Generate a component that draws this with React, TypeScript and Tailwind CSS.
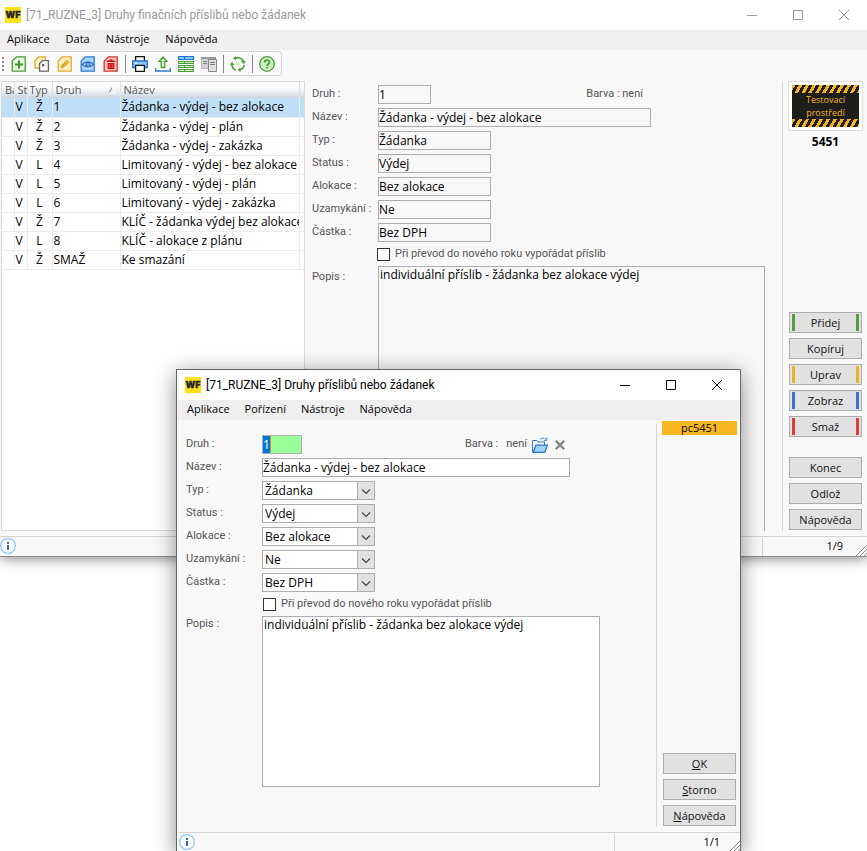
import { useEffect, useRef, useState } from 'react'
import type { ReactNode } from 'react'

const zaznamy = [
  { status: 'V', typ: 'Ž', druh: '1', nazev: 'Žádanka - výdej - bez alokace' },
  { status: 'V', typ: 'Ž', druh: '2', nazev: 'Žádanka - výdej - plán' },
  { status: 'V', typ: 'Ž', druh: '3', nazev: 'Žádanka - výdej - zakázka' },
  { status: 'V', typ: 'L', druh: '4', nazev: 'Limitovaný - výdej - bez alokace' },
  { status: 'V', typ: 'L', druh: '5', nazev: 'Limitovaný - výdej - plán' },
  { status: 'V', typ: 'L', druh: '6', nazev: 'Limitovaný - výdej - zakázka' },
  { status: 'V', typ: 'Ž', druh: '7', nazev: 'KLÍČ - žádanka výdej bez alokace' },
  { status: 'V', typ: 'L', druh: '8', nazev: 'KLÍČ - alokace z plánu' },
  { status: 'V', typ: 'Ž', druh: 'SMAŽ', nazev: 'Ke smazání' },
]

const detail = [
  { id: 'typ', label: 'Typ :', value: 'Žádanka' },
  { id: 'status', label: 'Status :', value: 'Výdej' },
  { id: 'alokace', label: 'Alokace :', value: 'Bez alokace' },
  { id: 'uzamykani', label: 'Uzamykání :', value: 'Ne' },
  { id: 'castka', label: 'Částka :', value: 'Bez DPH' },
]

const PAGE = 'M5.5 .8H14.2V15.2H1.2V5z'

function Icon({ children }: { children: ReactNode }) {
  return (
    <svg className="w-4 h-4 shrink-0" viewBox="0 0 16 16" fill="none" strokeWidth="1.3">
      {children}
    </svg>
  )
}

const icons: Record<string, ReactNode> = {
  Přidej: (
    <>
      <path d={PAGE} fill="#e6f7df" stroke="#4d9b3c" />
      <path d="M8 4.5v8M4 8.5h8" stroke="#3f9130" strokeWidth="2" />
    </>
  ),
  Kopíruj: (
    <>
      <path d="M4.5 .8H11.5V12H1V4.5z" fill="#fdf0c4" stroke="#e3ab2a" />
      <path d="M8.5 4.6H14.4V15.2H5.6V7.5z" fill="#fff" stroke="#666" />
      <path d="M8.5 7.5l2 1.5-2 2z" fill="#111" />
    </>
  ),
  Uprav: (
    <>
      <path d={PAGE} fill="#fdf0c4" stroke="#e3ab2a" />
      <path d="M3.6 12.4l.8-3.4L9.8 3.6l2.7 2.7L7 11.6z" fill="#e3a51f" />
      <path d="M8.6 4.8l2.6 2.6" stroke="#fff3c9" strokeWidth=".7" />
    </>
  ),
  Zobraz: (
    <>
      <path d={PAGE} fill="#a9d5ff" stroke="#2f78d0" />
      <path d="M2.3 8.5C5 5 10.5 5 13.4 8.5 10.5 11.5 5 11.5 2.3 8.5z" fill="#e5f3ff" stroke="#2f6dc0" />
      <circle cx="8" cy="8.4" r="2" fill="#7db8f5" stroke="#2f6dc0" />
    </>
  ),
  Smaž: (
    <>
      <path d={PAGE} fill="#ffc9c4" stroke="#d8322c" />
      <path d="M3.6 5.2h8.8M6.5 4.2h3" stroke="#c7120f" strokeWidth="1.5" />
      <path d="M4.6 7h6.8v6H4.6z" fill="#d01512" />
      <path d="M6.7 8v4M9.3 8v4" stroke="#f58a84" strokeWidth=".6" />
    </>
  ),
  Tisk: (
    <>
      <path d="M3.6 5V.7h8.8V5" fill="#fff" stroke="#111" />
      <path d="M.7 5h14.6v6.5H.7z" fill="#8ec6ff" stroke="#1f6fd0" />
      <path d="M3 7.2h2" stroke="#fff" />
      <path d="M3.6 9.4h8.8v5.9H3.6z" fill="#fff" stroke="#111" />
    </>
  ),
  Export: (
    <>
      <path d="M8 1L12 5.4H9.8V11.5H6.2V5.4H4z" fill="#d2f2c5" stroke="#4d9b3c" />
      <path d="M.7 12v3h14.6v-3" stroke="#2f78d0" />
    </>
  ),
  Seznam: (
    <>
      <path d="M0 0h16v4H0z" fill="#1f6fd0" />
      <path d="M1 1h5v2H1zM7 1h8v2H7z" fill="#8cc6fa" />
      <path d="M0 5h16v3H0zM0 9h16v3H0zM0 13h16v3H0z" fill="#4d9b3c" />
      <path d="M1 6h5v1H1zM7 6h8v1H7zM1 10h5v1H1zM7 10h8v1H7zM1 14h5v1H1zM7 14h8v1H7z" fill="#c9f0bb" />
    </>
  ),
  Náhled: (
    <>
      <path d="M.5 1.5h14v11H.5z" fill="#d0d0d0" stroke="#bdbdbd" strokeWidth="1" />
      <path d="M0 1h15v2H0z" fill="#9a9a9a" />
      <path d="M2 5.5h4M2 7.5h4" stroke="#8a8a8a" strokeWidth="1" />
      <path d="M7.500 3.500h8v12h-8z" fill="#e0e0e0" stroke="#888" strokeWidth="1" />
      <path d="M9 6.500h5M9 8.500h5" stroke="#777" strokeWidth="1" />
    </>
  ),
  Obnovit: (
    <>
      <path d="M5 2.300A6.300 6.300 0 0 1 13.400 5M14.200 9a6.300 6.300 0 0 1-4 5M6 14.100A6.300 6.300 0 0 1 1.800 8" stroke="#4d9b3c" strokeWidth="1.600" />
      <path d="M6 0v4.600L3 2.600zM11 5h5l-2.300 3.200zM10.500 11.400V16L7.600 14zM0 9l2-3.600L4.400 9z" fill="#4d9b3c" />
      <path d="M6.200 6.200h3.600v3.600H6.200z" fill="#c9f2bb" />
    </>
  ),
  Pomoc: (
    <>
      <circle cx="8" cy="8" r="7.300" fill="#c9f2bb" stroke="#4d9b3c" />
      <path d="M5.700 6.500C5.700 3.300 10.500 3.300 10.500 6.300 10.500 8 8.100 8 8.100 9.900M8.100 11v1.600" stroke="#3f9130" strokeWidth="1.600" />
    </>
  ),
}

function Logo() {
  return (
    <svg className="w-4 h-4 shrink-0" viewBox="0 0 16 16">
      <rect width="16" height="16" fill="#ffe01b" />
      <text x="8" y="11" textAnchor="middle" fontSize="9" fontWeight="900" fill="#24242c" stroke="#24242c" strokeWidth=".3" fontFamily="Inter, sans-serif">WF</text>
    </svg>
  )
}

function TitleBar({ title, active }: { title: string; active?: boolean }) {
  return (
    <header className={`flex items-center h-[30px] shrink-0 pr-[15px] bg-white ${active ? 'pl-2 text-black' : 'pl-[5px] text-[#999]'}`}>
      <Logo />
      <h1 className="flex-1 pl-[5px] text-[12px] leading-4 whitespace-nowrap font-['Roboto',sans-serif]">{title}</h1>
      <div className="flex gap-[30px]">
        <button aria-label="Minimalizovat" className="w-4 h-4">
          <svg viewBox="0 0 16 16" stroke="currentColor"><path d="M3 8.5h10" /></svg>
        </button>
        <button aria-label="Maximalizovat" className="w-4 h-4">
          <svg viewBox="0 0 16 16" fill="none" stroke="currentColor"><path d="M3.5 3.5h9v9h-9z" /></svg>
        </button>
        <button aria-label="Zavřít" className="w-4 h-4">
          <svg viewBox="0 0 16 16" stroke="currentColor"><path d="M3 3l10 10M13 3L3 13" /></svg>
        </button>
      </div>
    </header>
  )
}

function MenuBar({ items, active }: { items: string[]; active?: boolean }) {
  return (
    <nav className={`flex items-center h-5 shrink-0 pb-0.5 bg-[#efefef] ${active ? 'gap-[15px] pl-2.5' : 'gap-4 pl-[7px]'}`}>
      {items.map(i => (
        <button key={i}>{i}</button>
      ))}
    </nav>
  )
}

function StatusBar({ position, active }: { position: string; active?: boolean }) {
  return (
    <footer className={`flex h-5 shrink-0 border-t border-[#d4d4d4] ${active ? 'ml-0.5' : ''}`}>
      <div className="flex-1 pt-px">
        <svg className="w-4 h-4" viewBox="0 0 16 16">
          <circle cx="8" cy="8" r="7.4" fill="#fff" stroke="#8fc8f8" strokeWidth="1.2" />
          <path d="M7 4h2v2H7zM7 7h2v5H7z" fill="#2468c8" />
        </svg>
      </div>
      <div className={`flex items-center justify-end mt-px border-l border-[#d4d4d4] ${active ? 'w-[126px]' : 'w-[105px]'}`}>
        <span className={`pb-0.5 ${active ? 'pr-2' : 'pr-3'}`}>{position}</span>
        <svg className="w-3 h-3 self-end" viewBox="0 0 12 12" stroke="#8a8a8a">
          <path d="M1 12L12 1M5 12l7-7M9 12l3-3" />
        </svg>
      </div>
    </footer>
  )
}

function SideButton({ children, stripe }: { children: ReactNode; stripe?: string }) {
  return (
    <button className="flex items-center h-[21px] w-full px-0.5 border border-[#adadad] bg-[#e1e1e1] text-[#111]">
      {stripe && <span className={`w-[3px] h-[17px] ${stripe}`} />}
      <span className="flex-1">{children}</span>
      {stripe && <span className={`w-[3px] h-[17px] ${stripe}`} />}
    </button>
  )
}

const labelClass = "shrink-0 pb-0.5 text-[#555] font-['Roboto',sans-serif]"
const fieldClass = 'h-[19px] text-[12px] border border-[#abadb3] outline-none'

function Seznam() {
  const [vybrany, setVybrany] = useState('1')
  return (
    <div className="w-[304px] shrink-0 ml-px bg-white border border-[#d9d9d9] overflow-hidden">
      <table className="w-full table-fixed">
        <colgroup>
          <col className="w-3" />
          <col className="w-[13px]" />
          <col className="w-[25px]" />
          <col className="w-[68px]" />
          <col />
          <col className="w-[5px]" />
        </colgroup>
        <thead>
          <tr className="h-4 text-left text-[#555] bg-linear-to-b from-white via-[#f3f5f7] to-[#ccd5df]">
            <th className="font-normal pl-[3px] overflow-hidden whitespace-nowrap border-r border-[#dde1e6]">Ba</th>
            <th className="font-normal pl-[3px] overflow-hidden whitespace-nowrap border-r border-[#dde1e6]">St</th>
            <th className="font-normal pl-0.5 overflow-hidden whitespace-nowrap border-r border-[#dde1e6]">Typ</th>
            <th className="font-normal pl-[3px] border-r border-[#dde1e6]">
              <span className="flex items-center justify-between pr-1">
                Druh
                <svg className="w-2 h-2" viewBox="0 0 8 8" fill="none">
                  <path d="M1 7L4.5 1" stroke="#777" />
                  <path d="M4.5 1L7.5 7H1" stroke="#fff" />
                </svg>
              </span>
            </th>
            <th className="font-normal pl-[3px] border-r border-[#dde1e6]">Název</th>
            <th />
          </tr>
        </thead>
        <tbody className="text-[12px]">
          {zaznamy.map(z => (
            <tr
              key={z.druh}
              onClick={() => setVybrany(z.druh)}
              className={`h-[19px] border-b border-[#ececec] text-black ${z.druh === vybrany ? 'bg-[#bfdff6]' : ''}`}
            >
              <td className="border-r border-[#ececec]" />
              <td className="pl-px border-r border-[#ececec]">{z.status}</td>
              <td className="text-center border-r border-[#ececec]">{z.typ}</td>
              <td className="pl-px border-r border-[#ececec]">{z.druh}</td>
              <td className="pl-px overflow-hidden whitespace-nowrap border-r border-[#ececec]">{z.nazev}</td>
              <td />
            </tr>
          ))}
        </tbody>
      </table>
    </div>
  )
}

function Nahled() {
  return (
    <div className="flex-1 min-w-0 flex flex-col gap-1 pl-[7px] pr-[17px] pt-1">
      <div className="flex items-center h-[19px]">
        <label htmlFor="n-druh" className={`w-[66px] ${labelClass}`}>Druh :</label>
        <div className="flex items-center justify-between w-[273px] pr-2">
          <input id="n-druh" readOnly value="1" className={`w-[53px] ${fieldClass}`} />
          <span className={labelClass}>Barva : není</span>
        </div>
      </div>
      <div className="flex items-center h-[19px]">
        <label htmlFor="n-nazev" className={`w-[66px] ${labelClass}`}>Název :</label>
        <input id="n-nazev" readOnly value="Žádanka - výdej - bez alokace" className={`w-[273px] ${fieldClass}`} />
      </div>
      {detail.map(d => (
        <div key={d.id} className="flex items-center h-[19px]">
          <label htmlFor={`n-${d.id}`} className={`w-[66px] whitespace-nowrap ${labelClass}`}>{d.label}</label>
          <input id={`n-${d.id}`} readOnly value={d.value} className={`w-[113px] ${fieldClass}`} />
        </div>
      ))}
      <label className="flex items-center gap-[5px] h-4 ml-[65px] text-[#555] font-['Roboto',sans-serif]">
        <input type="checkbox" className="appearance-none w-[13px] h-[13px] border border-[#333] bg-white checked:bg-[#333]" />
        Při převod do nového roku vypořádat příslib
      </label>
      <div className="flex flex-1">
        <label htmlFor="n-popis" className={`w-[66px] pt-[3px] ${labelClass}`}>Popis :</label>
        <textarea
          id="n-popis"
          readOnly
          value="individuální příslib - žádanka bez alokace výdej"
          className="flex-1 min-w-0 px-px text-[12px] resize-none border border-b-0 border-[#abadb3] outline-none"
        />
      </div>
    </div>
  )
}

function HlavniOkno() {
  return (
    <section className="flex flex-col bg-[#f8f8f8] border-b border-[#8c8c8c] shadow-[0_2px_12px_rgba(0,0,0,0.45)]">
      <TitleBar title="[71_RUZNE_3] Druhy finačních příslibů nebo žádanek" />
      <MenuBar items={['Aplikace', 'Data', 'Nástroje', 'Nápověda']} />

      <div className="flex items-center self-start gap-[7px] h-[25px] mt-px pl-0.5 pr-1.5 bg-[#fafafa] border border-l-0 border-[#d4d4d4] rounded-r-sm">
        <svg className="w-0.5 h-4" viewBox="0 0 2 16" fill="#888">
          <path d="M0 1h2v2H0zM0 5h2v2H0zM0 9h2v2H0zM0 13h2v2H0z" />
        </svg>
        {Object.entries(icons).map(([nazev, icon]) => (
          <div key={nazev} className="flex items-center gap-[7px]">
            <button aria-label={nazev} className="block"><Icon>{icon}</Icon></button>
            {['Smaž', 'Náhled', 'Obnovit'].includes(nazev) && <span className="w-px h-[18px] -mx-px bg-[#888]" />}
          </div>
        ))}
      </div>

      <div className="flex h-[450px] my-[5px]">
        <Seznam />
        <Nahled />
        <aside className="flex flex-col items-center w-[85px] shrink-0 pl-[5px] pr-1 pb-px border-l border-[#d4d4d4]">
          <div className="w-full p-[3px] bg-white border border-[#dcdcdc]">
            <div className="flex flex-col bg-[#1d1d1a] text-[#f5b324]">
              <div className="h-2 bg-[repeating-linear-gradient(120deg,#f5b324_0_3px,#1d1d1a_3px_6px)]" />
              <p className="text-center text-[9px] leading-[13px]">Testovací<br />prostředí</p>
              <div className="h-2 bg-[repeating-linear-gradient(120deg,#f5b324_0_3px,#1d1d1a_3px_6px)]" />
            </div>
          </div>
          <strong className="mt-[3px] text-[12px] text-black">5451</strong>
          <div className="flex flex-col gap-[5px] w-[73px] mt-auto">
            <SideButton stripe="bg-[#559d3e]">Přidej</SideButton>
            <SideButton>Kopíruj</SideButton>
            <SideButton stripe="bg-[#e8b31e]">Uprav</SideButton>
            <SideButton stripe="bg-[#3374d4]">Zobraz</SideButton>
            <SideButton stripe="bg-[#dc3c3c]">Smaž</SideButton>
          </div>
          <div className="flex flex-col gap-[5px] w-[73px] mt-5">
            <SideButton>Konec</SideButton>
            <SideButton>Odlož</SideButton>
            <SideButton>Nápověda</SideButton>
          </div>
        </aside>
      </div>
      <StatusBar position="1/9" />
    </section>
  )
}

function Dialog() {
  const druhRef = useRef<HTMLInputElement>(null)

  useEffect(() => {
    druhRef.current?.focus()
    druhRef.current?.select()
  }, [])

  return (
    <section role="dialog" className="absolute left-44 top-[369px] -bottom-0.5 w-[565px] flex flex-col bg-[#f8f8f8] border border-[#666] shadow-[0_4px_20px_rgba(0,0,0,0.45)]">
      <TitleBar title="[71_RUZNE_3] Druhy příslibů nebo žádanek" active />
      <MenuBar items={['Aplikace', 'Pořízení', 'Nástroje', 'Nápověda']} active />

      <form className="flex flex-1 min-h-0" onSubmit={e => e.preventDefault()}>
        <div className="flex-1 flex flex-col gap-1 pl-[9px] pt-[15px]">
          <div className="flex items-center h-[19px]">
            <label htmlFor="d-druh" className={`w-[76px] ${labelClass}`}>Druh :</label>
            <div className="flex items-center w-[308px] pr-[5px]">
              <div className="relative mr-auto">
                <input
                  id="d-druh"
                  ref={druhRef}
                  defaultValue="1"
                  className={`block w-10 bg-[#99ff99] selection:bg-[#0078d7] selection:text-white ${fieldClass}`}
                />
                <span className="absolute left-2 top-px w-px h-4 bg-[#ff7a20]" />
              </div>
              <span className={labelClass}>Barva :</span>
              <span className={`pl-2 pr-[5px] ${labelClass}`}>není</span>
              <button type="button" aria-label="Vybrat barvu" className="mr-[7px]">
                <svg className="block w-4 h-4" viewBox="0 0 16 16" fill="none" stroke="#2673cc">
                  <path d="M.6 15V3.5h4l1.5 1.5h6.5v3" fill="#fff" />
                  <path d="M1 15.4L4 8.2h11.4l-2.6 7.2z" fill="#9dd0ff" strokeWidth="1.2" />
                  <path d="M8 2.5C9.5 .6 12 .6 14 2.6M14.8 .3v3.3h-3" stroke="#4d8fd8" />
                </svg>
              </button>
              <button type="button" aria-label="Zrušit barvu">
                <svg className="block w-2.5 h-2.5" viewBox="0 0 10 10" stroke="#7c7c7c" strokeWidth="2">
                  <path d="M.8 .8l8.4 8.4M9.2 .8L.8 9.2" />
                </svg>
              </button>
            </div>
          </div>
          <div className="flex items-center h-[19px]">
            <label htmlFor="d-nazev" className={`w-[76px] ${labelClass}`}>Název :</label>
            <input id="d-nazev" defaultValue="Žádanka - výdej - bez alokace" className={`w-[308px] bg-white ${fieldClass}`} />
          </div>
          {detail.map(d => (
            <div key={d.id} className="flex items-center h-[19px]">
              <label htmlFor={`d-${d.id}`} className={`w-[76px] ${labelClass}`}>{d.label}</label>
              <div className="relative">
                <select id={`d-${d.id}`} className={`block w-[113px] pl-0.5 appearance-none bg-white ${fieldClass}`}>
                  <option>{d.value}</option>
                </select>
                <span className="absolute right-0 top-0 flex items-center justify-center w-[18px] h-[19px] border border-[#abadb3] bg-[#e1e1e1] pointer-events-none">
                  <svg className="w-2.5 h-2.5" viewBox="0 0 10 10" fill="none" stroke="#444" strokeWidth="1.2">
                    <path d="M1 3.5l4 4 4-4" />
                  </svg>
                </span>
              </div>
            </div>
          ))}
          <label className="flex items-center gap-[5px] h-4 ml-[77px] text-[#555] font-['Roboto',sans-serif]">
            <input type="checkbox" className="appearance-none w-[13px] h-[13px] border border-[#333] bg-white checked:bg-[#333]" />
            Při převod do nového roku vypořádat příslib
          </label>
          <div className="flex flex-1 mb-[45px]">
            <label htmlFor="d-popis" className={`w-[76px] ${labelClass}`}>Popis :</label>
            <textarea
              id="d-popis"
              defaultValue="individuální příslib - žádanka bez alokace výdej"
              className="w-[338px] px-px text-[12px] resize-none bg-white border border-[#abadb3] outline-none"
            />
          </div>
        </div>
        <aside className="flex flex-col w-[84px] shrink-0 mt-1 mb-[5px] pb-px border-l border-[#d4d4d4]">
          <div className="h-3.5 -mt-[3px] ml-[5px] mr-[3px] bg-[#f9b822] text-center leading-[14px] text-black">pc5451</div>
          <div className="flex flex-col gap-[5px] w-[73px] ml-1.5 mt-auto">
            <SideButton><u>O</u>K</SideButton>
            <SideButton><u>S</u>torno</SideButton>
            <SideButton><u>N</u>ápověda</SideButton>
          </div>
        </aside>
      </form>
      <StatusBar position="1/1" active />
    </section>
  )
}

export default function App() {
  return (
    <main className="relative h-screen overflow-hidden bg-white text-[11px] leading-4 text-black font-['Open_Sans','Noto_Sans',sans-serif]">
      <HlavniOkno />
      <Dialog />
    </main>
  )
}
